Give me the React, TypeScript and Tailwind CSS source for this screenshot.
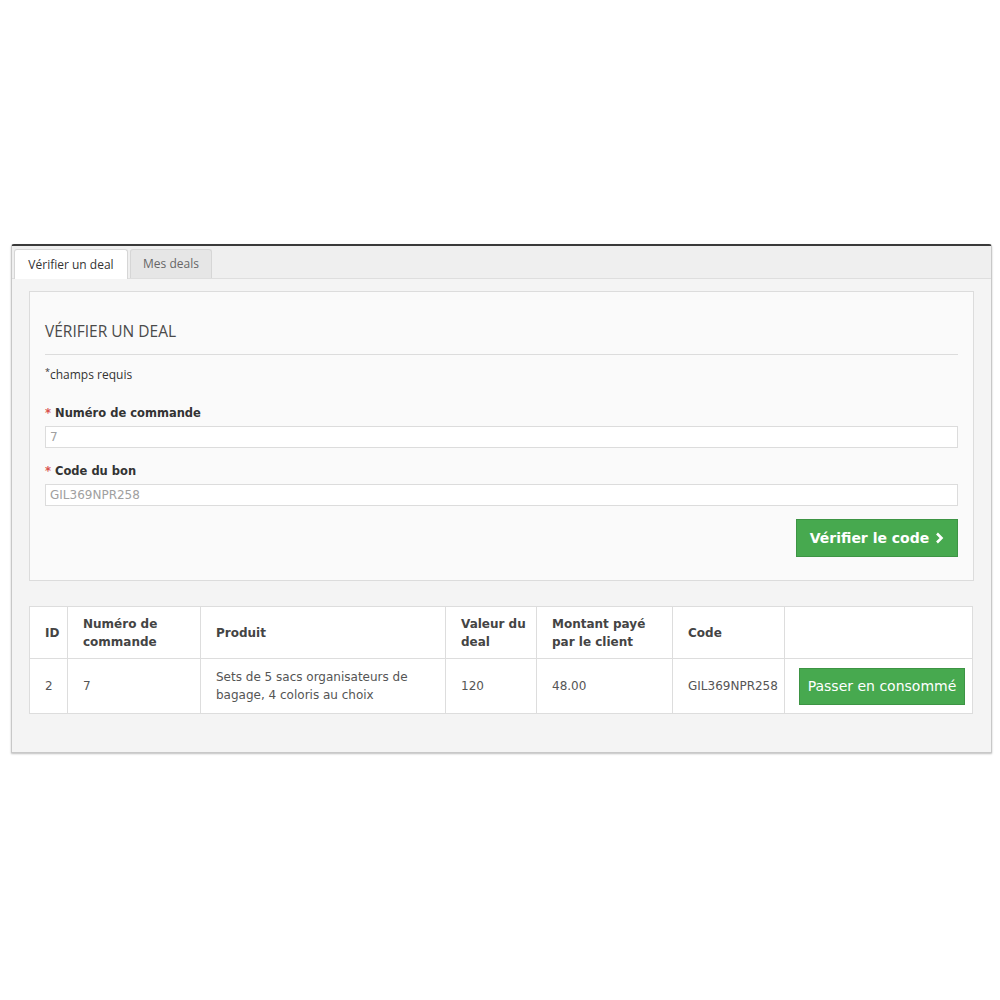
import React from 'react';

const font = { fontFamily: '"DejaVu Sans", Verdana, sans-serif' };
const open = { fontFamily: '"Open Sans", sans-serif' };

function Label({ children }: { children: React.ReactNode }) {
  return (
    <div className="text-[11.5px] font-bold text-[#333] h-[14px] leading-[14px]">
      <span className="text-[#d9534f] mr-1">*</span>
      {children}
    </div>
  );
}

function Field({ value }: { value: string }) {
  return (
    <div className="mt-[6px] h-[22px] bg-white border border-[#dcdcdc] px-[4px] text-[12px] leading-[20px] text-[#a0a0a0]">
      {value}
    </div>
  );
}

export default function App() {
  const head: React.ReactNode[] = [
    'ID',
    <>Numéro de<br />commande</>,
    'Produit',
    <>Valeur du<br />deal</>,
    <>Montant payé<br />par le client</>,
    'Code',
    '',
  ];
  const widths = ['w-[38px]', 'w-[133px]', 'w-[245px]', 'w-[91px]', 'w-[136px]', 'w-[112px]', 'w-[188px]'];
  const cell = 'border border-[#dddddd] pl-[15px] pr-[4px]';

  return (
    <div className="w-[1000px] h-[1000px] bg-white pt-[244px] px-[11px]" style={font}>
      {/* panneau principal */}
      <div className="w-[981px] h-[509px] bg-[#f4f4f4] border-t-2 border-t-[#3a3a3a] border-x border-b border-[#c8c8c8] rounded-t-[3px] shadow-[0_1px_2px_rgba(0,0,0,0.25)]">
        {/* onglets */}
        <div className="h-[33px] bg-[#efefef] border-b border-[#dedede] flex items-end pl-[2px] gap-[2px]">
          <div className="h-[30px] w-[114px] bg-white border border-b-0 border-[#d6d6d6] rounded-t-[3px] text-[12px] text-[#333] flex items-center justify-center -mb-px" style={open}>
            Vérifier un deal
          </div>
          <div className="h-[29px] w-[82px] bg-[#e6e6e6] border border-b-0 border-[#d6d6d6] rounded-t-[3px] text-[12px] text-[#666] flex items-center justify-center" style={open}>
            Mes deals
          </div>
        </div>

        <div className="px-[17px] pt-[12px]">
          {/* formulaire */}
          <div className="h-[290px] bg-[#fafafa] border border-[#dcdcdc] px-[15px]">
            <div className="pt-[29px] pb-[13px] border-b border-[#dcdcdc] text-[15.5px] text-[#4a4a4a] leading-[20px]" style={open}>
              VÉRIFIER UN DEAL
            </div>
            <div className="mt-[13px] text-[12px] text-[#333] leading-[14px]" style={open}>
              <sup className="text-[9px]">*</sup>champs requis
            </div>
            <div className="mt-[24px]">
              <Label>Numéro de commande</Label>
              <Field value="7" />
            </div>
            <div className="mt-[16px]">
              <Label>Code du bon</Label>
              <Field value="GIL369NPR258" />
            </div>
            <div className="mt-[13px] flex justify-end">
              <div className="h-[38px] w-[162px] bg-[#47a94f] border border-[#3d9444] text-white font-bold text-[14px] flex items-center justify-center gap-[6px]">
                Vérifier le code
                <svg width="9" height="12" viewBox="0 0 9 12">
                  <path d="M2 1.5 L6.5 6 L2 10.5" stroke="white" strokeWidth="2.6" fill="none" />
                </svg>
              </div>
            </div>
          </div>

          {/* tableau */}
          <table className="mt-[25px] w-[943px] table-fixed bg-white border-collapse text-[12px] text-[#555]">
            <colgroup>
              {widths.map((w, i) => (
                <col key={i} className={w} />
              ))}
            </colgroup>
            <thead>
              <tr className="h-[52px]">
                {head.map((h, i) => (
                  <th key={i} className={`${cell} text-left align-middle font-bold text-[#444] leading-[18px]`}>
                    {h}
                  </th>
                ))}
              </tr>
            </thead>
            <tbody>
              <tr className="h-[55px]">
                <td className={cell}>2</td>
                <td className={cell}>7</td>
                <td className={`${cell} leading-[18px]`}>Sets de 5 sacs organisateurs de<br />bagage, 4 coloris au choix</td>
                <td className={cell}>120</td>
                <td className={cell}>48.00</td>
                <td className={cell}>GIL369NPR258</td>
                <td className="border border-[#dddddd] pl-[14px] pr-[6px]">
                  <div className="h-[37px] w-[166px] bg-[#47a94f] border border-[#3d9444] text-white text-[14px] flex items-center justify-center">
                    Passer en consommé
                  </div>
                </td>
              </tr>
            </tbody>
          </table>
        </div>
      </div>
    </div>
  );
}
